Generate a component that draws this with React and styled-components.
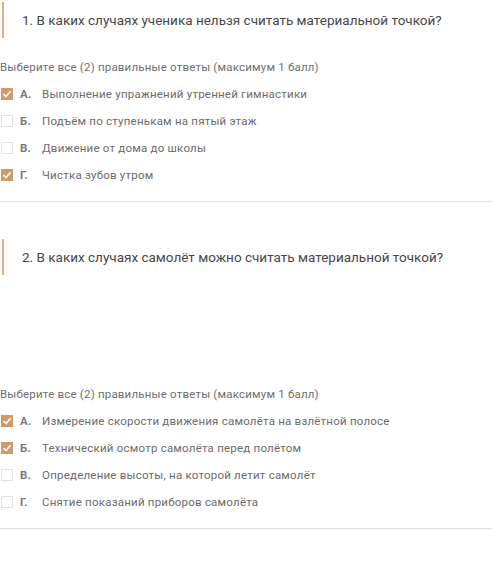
import React from "react";
import styled, { createGlobalStyle } from "styled-components";

const Global = createGlobalStyle`
  html, body { margin: 0; padding: 0; background: #fff; }
  body { font-family: Roboto, "Open Sans", Arial, sans-serif; }
`;

const Page = styled.div`
  padding-top: 2px;
  width: 492px;
`;

const Question = styled.section`
  display: flex;
  flex-direction: column;
`;

const Header = styled.div`
  height: 36px;
  margin-left: 2px;
  border-left: 2px solid #dcb285;
  padding-left: 18px;
  display: flex;
  align-items: center;
  font-size: 13.5px;
  color: #474747;
  font-weight: 400;
`;

const Spacer = styled.div`
  height: ${(p) => p.h}px;
`;

const Instruction = styled.div`
  margin-top: 21px;
  line-height: 16px;
  font-size: 11.5px;
  color: #6e6e6e;
  letter-spacing: 0.2px;
`;

const Options = styled.ul`
  list-style: none;
  margin: 5px 0 0 0;
  padding: 0;
`;

const Row = styled.li`
  height: 27px;
  display: flex;
  align-items: center;
  font-size: 11.5px;
  color: #6b6b6b;
  letter-spacing: 0.22px;
`;

const Box = styled.span`
  width: 12px;
  height: 12px;
  margin-left: 1px;
  box-sizing: border-box;
  border: 1px solid ${(p) => (p.checked ? "#d09a68" : "#e2e2e2")};
  background: ${(p) => (p.checked ? "#d09a68" : "#fff")};
  display: flex;
  align-items: center;
  justify-content: center;
`;

const Letter = styled.span`
  font-weight: 700;
  color: #7a7a7a;
  width: 22px;
  margin-left: 7px;
`;

const Divider = styled.hr`
  margin: 13px 0 0 0;
  border: none;
  border-top: 1px solid #dedede;
  height: 0;
`;

const Check = () => (
  <svg width="10" height="10" viewBox="0 0 10 10">
    <path d="M1.5 5.2 L4 7.6 L8.6 2.2" fill="none" stroke="#fff" strokeWidth="1.6" />
  </svg>
);

const data = [
  {
    title: "1. В каких случаях ученика нельзя считать материальной точкой?",
    spacer: 0,
    options: [
      ["А.", "Выполнение упражнений утренней гимнастики", true],
      ["Б.", "Подъём по ступенькам на пятый этаж", false],
      ["В.", "Движение от дома до школы", false],
      ["Г.", "Чистка зубов утром", true],
    ],
  },
  {
    title: "2. В каких случаях самолёт можно считать материальной точкой?",
    spacer: 90,
    options: [
      ["А.", "Измерение скорости движения самолёта на взлётной полосе", true],
      ["Б.", "Технический осмотр самолёта перед полётом", true],
      ["В.", "Определение высоты, на которой летит самолёт", false],
      ["Г.", "Снятие показаний приборов самолёта", false],
    ],
  },
];

const QuestionGap = styled.div`
  height: 37px;
`;

export default function App() {
  return (
    <Page>
      <Global />
      {data.map((q, i) => (
        <React.Fragment key={i}>
          {i > 0 && <QuestionGap />}
          <Question>
            <Header>{q.title}</Header>
            {q.spacer > 0 && <Spacer h={q.spacer} />}
            <Instruction>Выберите все (2) правильные ответы (максимум 1 балл)</Instruction>
            <Options>
              {q.options.map(([l, t, c]) => (
                <Row key={l}>
                  <Box checked={c}>{c && <Check />}</Box>
                  <Letter>{l}</Letter>
                  <span>{t}</span>
                </Row>
              ))}
            </Options>
            <Divider />
          </Question>
        </React.Fragment>
      ))}
    </Page>
  );
}
